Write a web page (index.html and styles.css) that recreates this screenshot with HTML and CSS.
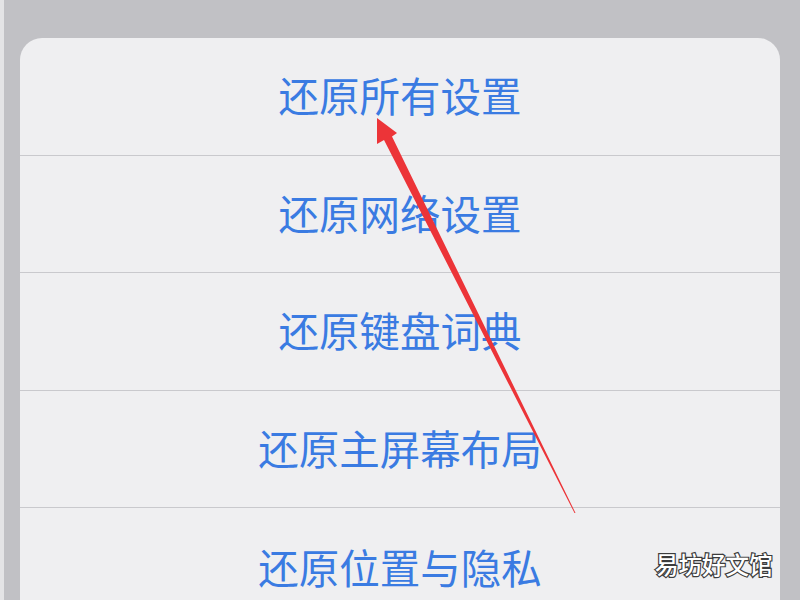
FILE: index.html
```html
<!DOCTYPE html>
<html lang="zh">
<head>
<meta charset="utf-8">
<link rel="stylesheet" href="styles.css">
</head>
<body>
<div class="screen">
  <div class="sheet">
    <div class="row">还原所有设置</div>
    <div class="row">还原网络设置</div>
    <div class="row">还原键盘词典</div>
    <div class="row">还原主屏幕布局</div>
    <div class="row last">还原位置与隐私</div>
  </div>
  <svg class="arrow" width="800" height="600" viewBox="0 0 800 600">
    <polygon points="377,118 397,133 392,136.5 575.5,513 574.5,513 384,140 377,144" fill="#ec3438"/>
  </svg>
  <div class="watermark">易坊好文馆</div>
</div>
</body>
</html>
```

FILE: styles.css
```css
html, body {
  margin: 0;
  padding: 0;
}
body {
  width: 800px;
  height: 600px;
  overflow: hidden;
  background: #c1c1c5;
  font-family: "Noto Sans CJK SC", "Noto Sans", sans-serif;
}
.screen {
  position: relative;
  width: 800px;
  height: 600px;
  padding: 38px 20px 0 20px;
  box-sizing: border-box;
  border-left: 4px solid #e4e4e6;
}
.sheet {
  margin-left: -4px;
  width: 760px;
  height: 562px;
  background: #efeff1;
  border-radius: 22px 22px 0 0;
  display: flex;
  flex-direction: column;
  overflow: hidden;
}
.row {
  flex: 0 0 117.5px;
  box-sizing: border-box;
  border-bottom: 1px solid #c9c9cd;
  display: flex;
  align-items: center;
  justify-content: center;
  color: #3a7be2;
  font-size: 40.5px;
  line-height: 1;
  padding-bottom: 2px;
}
.row.last {
  border-bottom: none;
  padding-bottom: 0;
  padding-top: 1px;
}
.arrow {
  position: absolute;
  left: -4px;
  top: 0;
}
.watermark {
  position: absolute;
  left: 651px;
  top: 550px;
  font-size: 23.5px;
  font-weight: 500;
  line-height: 1.2;
  color: #ffffff;
  -webkit-text-stroke: 2.4px #3c3c3c;
  paint-order: stroke fill;
}
```
